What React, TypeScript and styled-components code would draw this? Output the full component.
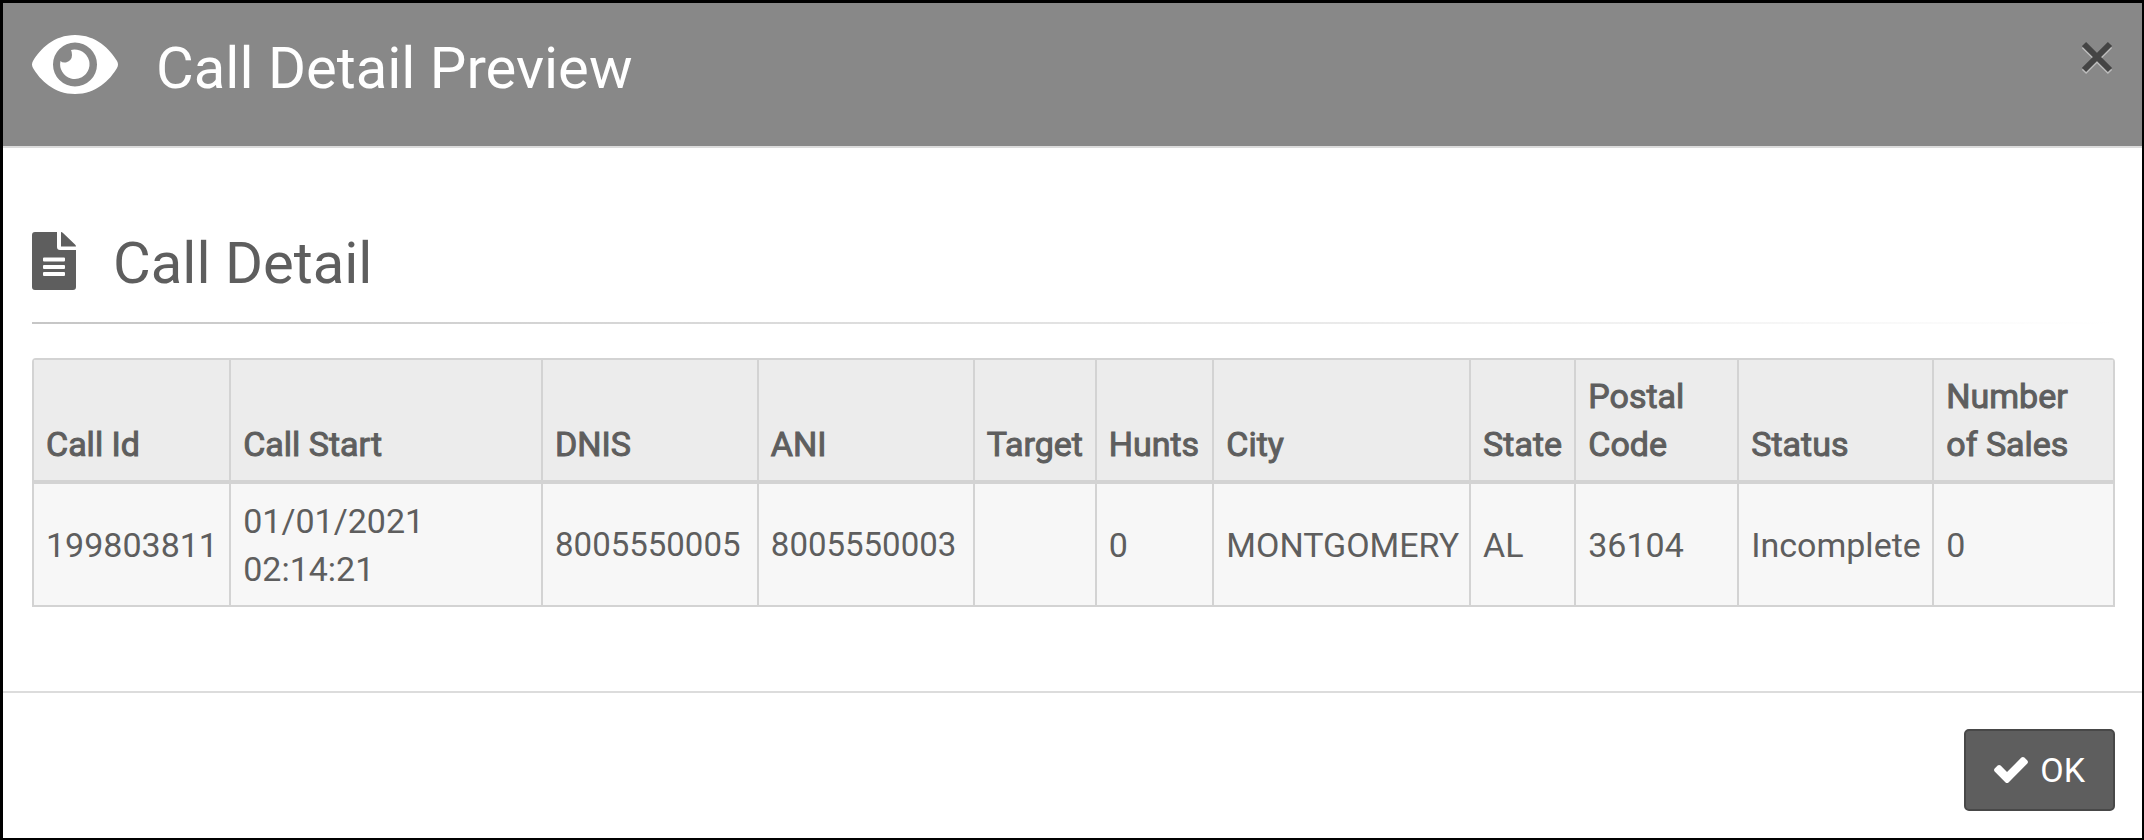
import React from 'react';
import styled, { createGlobalStyle } from 'styled-components';

const GlobalStyle = createGlobalStyle`
  *, *::before, *::after { box-sizing: border-box; }
  html, body, #root { height: 100%; }
  body {
    margin: 0;
    background: #fff;
    color: #5e5e5e;
    font-family: Roboto, "Liberation Sans", sans-serif;
    font-size: 34px;
    line-height: 48px;
  }
`;

const Dialog = styled.section`
  display: flex;
  flex-direction: column;
  min-height: 100%;
  border: 3px solid #000;
  border-right-width: 2px;
  border-bottom-width: 2px;
`;

const Header = styled.header`
  display: flex;
  align-items: flex-start;
  height: 145px;
  padding: 32px 28px 0;
  background: #888;
  color: #fff;
  border-bottom: 2px solid #dcdcdc;
`;

const Title = styled.h1`
  flex: 1;
  margin: 0;
  padding-left: 37px;
  font-size: 58px;
  font-weight: 400;
  line-height: 66px;
`;

const CloseButton = styled.button`
  display: flex;
  margin: 0;
  padding: 6px 0;
  border: 0;
  background: none;
  color: #444;
  cursor: pointer;
`;

const Body = styled.main`
  flex: 1;
  padding: 76px 27px 76px 29px;
`;

const SectionHeading = styled.div`
  display: flex;
  align-items: flex-start;
  padding: 8px 0;
`;

const SectionTitle = styled.h2`
  margin: 0;
  padding-left: 37px;
  font-size: 58px;
  font-weight: 400;
  line-height: 62px;
`;

const Rule = styled.hr`
  height: 2px;
  margin: 20px 0 34px;
  border: 0;
  background: linear-gradient(to right, #c6c6c6, #fff);
`;

const Table = styled.table`
  width: 100%;
  table-layout: fixed;
  border: 2px solid #d3d3d3;
  border-radius: 4px 4px 0 0;
  border-spacing: 0;
  background: #f7f7f7;
`;

const Col = styled.col<{ $share: number }>`
  width: ${({ $share }) => $share}%;
`;

const HeadCell = styled.th`
  height: 124px;
  padding: 12px 11px 12px 12px;
  border-bottom: 4px solid #d3d3d3;
  background: #ececec;
  font-weight: 400;
  -webkit-text-stroke: 1px currentColor;
  text-align: left;
  vertical-align: bottom;
  & + & { border-left: 2px solid #d3d3d3; }
`;

const Cell = styled.td<{ $phone?: boolean }>`
  height: 121px;
  padding: 12px 11px 12px 12px;
  font-size: ${({ $phone }) => ($phone ? '33px' : 'inherit')};
  vertical-align: middle;
  & + & { border-left: 2px solid #d3d3d3; }
`;

const Footer = styled.footer`
  display: flex;
  justify-content: flex-end;
  padding: 36px 27px 27px;
  border-top: 2px solid #dcdcdc;
`;

const OkButton = styled.button`
  display: flex;
  align-items: center;
  gap: 12px;
  height: 82px;
  padding: 0 28px;
  border: 2px solid #484848;
  border-radius: 5px;
  background: #5e5e5e;
  color: #fff;
  font: inherit;
  cursor: pointer;
`;

const EyeIcon = () => (
  <svg width="88" height="59" viewBox="0 0 88 59" aria-hidden="true">
    <path
      fill="#fff"
      fillRule="evenodd"
      d="M44 0C65 0 79 14 86 26Q88 29.500 86 33C79 45 65 59 44 59S9 45 2 33Q0 29.500 2 26C9 14 23 0 44 0ZM44 7.500a22 22 0 1 0 0 44a22 22 0 1 0 0-44Z"
    />
    <path fill="#fff" d="M40 15Q44 14 49 15.500A14.700 14.700 0 1 1 29.500 26Q31 28 35 27.500Q41 25.500 41 20Q41 17 40 15Z" />
  </svg>
);

const DocumentIcon = () => (
  <svg width="44" height="58" viewBox="0 0 44 58" aria-hidden="true">
    <path
      fill="#5e5e5e"
      fillRule="evenodd"
      d="M3 0H25V15Q25 18 28 18H44V55Q44 58 41 58H3Q0 58 0 55V3Q0 0 3 0ZM12 25.500q-1 0-1 1v2q0 1 1 1H32q1 0 1-1v-2q0-1-1-1ZM12 33q-1 0-1 1v2q0 1 1 1H32q1 0 1-1v-2q0-1-1-1ZM12 40q-1 0-1 1v2q0 1 1 1H32q1 0 1-1v-2q0-1-1-1Z"
    />
    <path fill="#5e5e5e" d="M29 0Q30 0 31 1L43 12.500Q44 13.500 44 14.500H29Z" />
  </svg>
);

const CloseIcon = () => (
  <svg width="32" height="34" viewBox="0 0 32 34" aria-hidden="true">
    <path d="M2 5L28 31M28 5L2 31" stroke="#bdbdbd" strokeWidth="6" fill="none" />
    <path d="M2 3L28 29M28 3L2 29" stroke="#444" strokeWidth="6" fill="none" />
  </svg>
);

const CheckIcon = () => (
  <svg width="34" height="26" viewBox="121 334 1550 1188" aria-hidden="true">
    <path
      fill="#fff"
      d="M1671 566q0 40-28 68l-724 724-136 136q-28 28-68 28t-68-28l-136-136-362-362q-28-28-28-68t28-68l136-136q28-28 68-28t68 28l294 295 656-657q28-28 68-28t68 28l136 136q28 28 28 68z"
    />
  </svg>
);

const columns = [
  { label: 'Call Id', value: '199803811', share: 9.39 },
  { label: 'Call Start', value: '01/01/2021 02:14:21', share: 15 },
  { label: 'DNIS', value: '8005550005', share: 10.38, phone: true },
  { label: 'ANI', value: '8005550003', share: 10.38, phone: true },
  { label: 'Target', value: '', share: 5.87 },
  { label: 'Hunts', value: '0', share: 5.66 },
  { label: 'City', value: 'MONTGOMERY', share: 12.35 },
  { label: 'State', value: 'AL', share: 5.06 },
  { label: 'Postal Code', value: '36104', share: 7.84 },
  { label: 'Status', value: 'Incomplete', share: 9.38 },
  { label: 'Number of Sales', value: '0', share: 8.69 },
];

export default function App() {
  return (
    <>
      <GlobalStyle />
      <Dialog role="dialog" aria-labelledby="dialog-title">
        <Header>
          <EyeIcon />
          <Title id="dialog-title">Call Detail Preview</Title>
          <CloseButton type="button" aria-label="Close">
            <CloseIcon />
          </CloseButton>
        </Header>
        <Body>
          <SectionHeading>
            <DocumentIcon />
            <SectionTitle>Call Detail</SectionTitle>
          </SectionHeading>
          <Rule />
          <Table>
            <colgroup>
              {columns.map((c) => (
                <Col key={c.label} $share={c.share} />
              ))}
            </colgroup>
            <thead>
              <tr>
                {columns.map((c) => (
                  <HeadCell key={c.label} scope="col">{c.label}</HeadCell>
                ))}
              </tr>
            </thead>
            <tbody>
              <tr>
                {columns.map((c) => (
                  <Cell key={c.label} $phone={c.phone}>{c.value}</Cell>
                ))}
              </tr>
            </tbody>
          </Table>
        </Body>
        <Footer>
          <OkButton type="button">
            <CheckIcon />
            OK
          </OkButton>
        </Footer>
      </Dialog>
    </>
  );
}
